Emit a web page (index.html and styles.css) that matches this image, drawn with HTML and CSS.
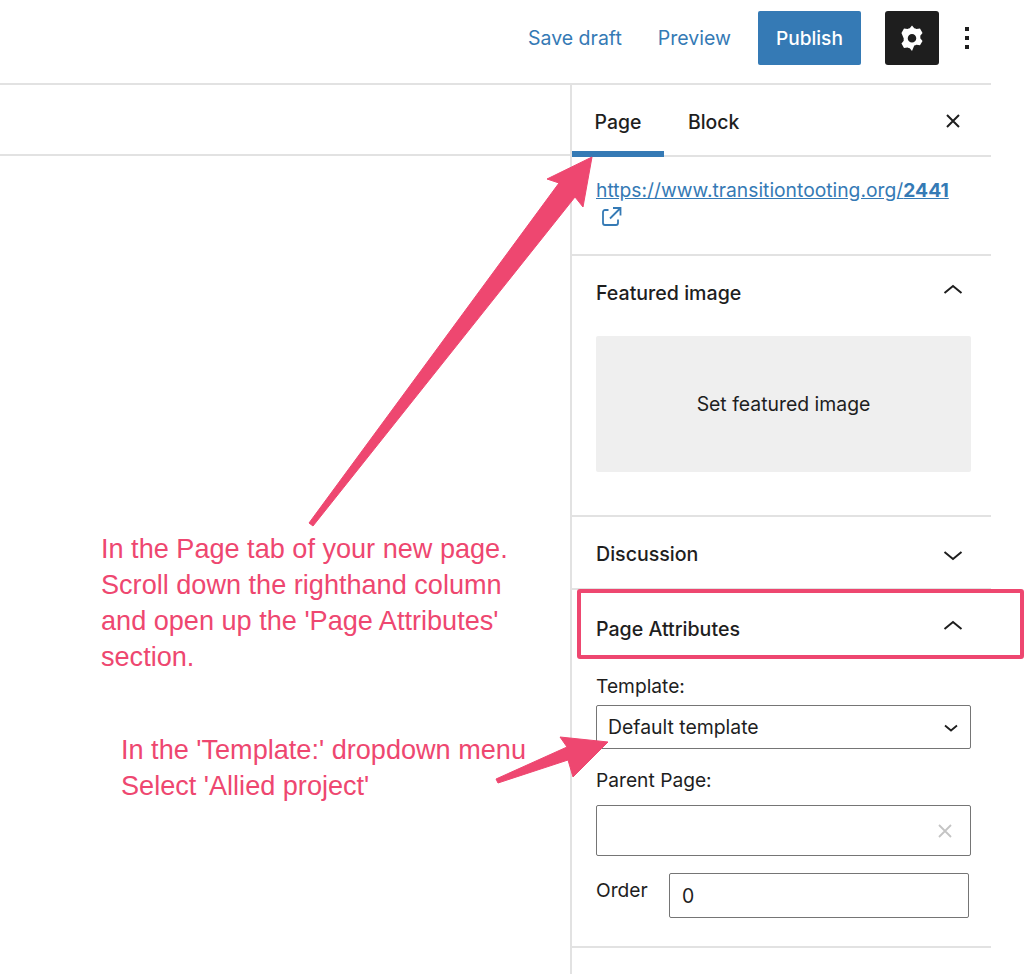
FILE: index.html
```html
<!DOCTYPE html>
<html lang="en">
<head>
<meta charset="utf-8">
<title>Page settings</title>
<link rel="stylesheet" href="styles.css">
</head>
<body>
<div class="app">
  <header class="topbar">
    <a class="top-link save">Save draft</a>
    <a class="top-link preview">Preview</a>
    <button class="publish">Publish</button>
    <button class="gear" aria-label="Settings">
      <svg width="32" height="32" viewBox="0 0 24 24"><path fill="#fff" fill-rule="evenodd" d="M12 2.600l1.700 2.100c.6.1 1.100.3 1.600.6l2.700-.4 1.900 3.300-1.700 2.100c.1.6.1 1.200 0 1.800l1.700 2.100-1.900 3.300-2.700-.4c-.5.3-1 .5-1.600.6L12 21.800l-1.700-2.100c-.6-.1-1.100-.3-1.600-.6l-2.700.4-1.900-3.300 1.700-2.100c-.1-.6-.1-1.200 0-1.800L4.100 8.200l1.900-3.300 2.700.4c.5-.3 1-.5 1.600-.6zM12 9a3.200 3.200 0 1 0 0 6.400A3.200 3.200 0 0 0 12 9z"/></svg>
    </button>
    <div class="dots"><i></i><i></i><i></i></div>
  </header>
  <div class="body">
    <main class="canvas"><div class="canvas-bar"></div></main>
    <aside class="sidebar">
      <div class="tabs">
        <span class="tab active">Page</span>
        <span class="tab">Block</span>
        <svg class="close" width="24" height="24" viewBox="0 0 24 24"><path d="M6 6l12 12M18 6L6 18" stroke="#1e1e1e" stroke-width="2" fill="none"/></svg>
      </div>
      <section class="url">
        <a class="url-link">https://www.transitiontooting.org/<b>2441</b></a>
        <svg class="ext" width="24" height="24" viewBox="0 0 24 24" fill="none" stroke="#357ab5" stroke-width="1.800"><path d="M9.500 5H6a2 2 0 0 0-2 2v11a2 2 0 0 0 2 2h11a2 2 0 0 0 2-2v-3.500"/><path d="M11 13.500L21 3.500M14 3h7.500v7.500"/></svg>
      </section>
      <section class="panel featured">
        <div class="panel-head"><h2>Featured image</h2><svg class="chev" width="24" height="24" viewBox="0 0 24 24"><path d="M3.500 15L12 8l8.500 7" fill="none" stroke="#1e1e1e" stroke-width="2"/></svg></div>
        <div class="set-image">Set featured image</div>
      </section>
      <section class="panel discussion">
        <div class="panel-head"><h2>Discussion</h2><svg class="chev" width="24" height="24" viewBox="0 0 24 24"><path d="M3.500 9l8.500 7 8.500-7" fill="none" stroke="#1e1e1e" stroke-width="2"/></svg></div>
      </section>
      <section class="panel attributes">
        <div class="panel-head"><h2>Page Attributes</h2><svg class="chev" width="24" height="24" viewBox="0 0 24 24"><path d="M3.500 15L12 8l8.500 7" fill="none" stroke="#1e1e1e" stroke-width="2"/></svg></div>
        <label class="field-label template-label">Template:</label>
        <div class="control select"><span>Default template</span><svg width="16" height="16" viewBox="0 0 16 16"><path d="M2 6.500l6 5 6-5" fill="none" stroke="#1e1e1e" stroke-width="1.800"/></svg></div>
        <label class="field-label parent-label">Parent Page:</label>
        <div class="control combo"><svg width="18" height="18" viewBox="0 0 18 18"><path d="M3 3l12 12M15 3L3 15" stroke="#c4c4c4" stroke-width="1.800" fill="none"/></svg></div>
        <div class="order-row"><label class="field-label order-label">Order</label><div class="control order">0</div></div>
      </section>
    </aside>
  </div>
</div>

<svg class="overlay" width="1024" height="974" viewBox="0 0 1024 974" aria-hidden="true">
  <path fill="#ee4770" stroke="#ee4770" stroke-width="1" stroke-linejoin="round" d="M592 157L583 207 575 197 313 526 309 523 559 183 547 179Z"/>
  <path fill="#ee4770" stroke="#ee4770" stroke-width="1" stroke-linejoin="round" d="M608 742L573 777 568 760 498 783 496 779 567 747 560 737Z"/>
  <rect x="579" y="591" width="443" height="66" fill="none" stroke="#ee4770" stroke-width="4" rx="1"/>
</svg>
<p class="note note-one">In the Page tab of your new page.<br>Scroll down the righthand column<br>and open up the 'Page Attributes'<br>section.</p>
<p class="note note-two">In the 'Template:' dropdown menu<br>Select 'Allied project'</p>
</body>
</html>
```
FILE: styles.css
```css
* { box-sizing: border-box; }
html, body { margin: 0; padding: 0; background: #fff; }
body { width: 1024px; height: 974px; overflow: hidden; position: relative; font-family: Inter, "Noto Sans", sans-serif; color: #1e1e1e; }
.app { width: 991px; height: 974px; display: flex; flex-direction: column; }

.topbar { height: 85px; flex: none; border-bottom: 2px solid #e2e2e2; display: flex; align-items: flex-start; padding: 11px 0 0 528px; font-size: 19.500px; }
.top-link { color: #357ab5; line-height: 54px; }
.save { margin-right: 36px; }
.preview { margin-right: 27px; }
.publish { width: 103px; height: 54px; border: 0; border-radius: 2px; background: #357ab5; color: #fff; font: 500 19.100px Inter, sans-serif; margin-right: 24px; padding: 0; }
.gear { width: 54px; height: 54px; border: 0; border-radius: 3px; background: #1e1e1e; display: flex; align-items: center; justify-content: center; padding: 0; }
.dots { margin: 16px 0 0 26px; width: 4px; display: flex; flex-direction: column; gap: 5px; }
.dots i { display: block; width: 4px; height: 4px; background: #1e1e1e; }

.body { flex: 1; display: flex; min-height: 0; }
.canvas { width: 570px; flex: none; }
.canvas-bar { height: 71px; border-bottom: 2px solid #e2e2e2; }
.sidebar { flex: 1; border-left: 2px solid #e2e2e2; display: flex; flex-direction: column; }

.tabs { height: 72px; flex: none; display: flex; align-items: flex-start; border-bottom: 2px solid #e2e2e2; position: relative; }
.tab { font-size: 19.400px; font-weight: 500; line-height: 74px; height: 72px; width: 92px; text-align: center; flex: none; }
.tab.active { box-shadow: inset 0 -6px 0 #357ab5; }
.tab + .tab { width: auto; margin-left: 24px; }
.close { margin: 24px 26px 0 auto; }

.url { height: 99px; flex: none; padding: 20px 24px 0; border-bottom: 2px solid #e2e2e2; }
.url-link { display: block; color: #357ab5; font-size: 19.300px; line-height: 26px; text-decoration: underline; white-space: nowrap; }
.ext { display: block; margin: 2px 0 0 3px; }

.panel { flex: none; border-bottom: 2px solid #e2e2e2; padding: 0 20px 0 24px; }
.panel-head { display: flex; justify-content: space-between; align-items: center; height: 72px; padding-top: 2px; }
.panel-head h2 { margin: 0; font-size: 19.600px; font-weight: 500; line-height: 24px; }
.chev { margin-right: 6px; margin-top: -6px; }

.featured { height: 261px; }
.set-image { width: 375px; height: 136px; margin-top: 8px; background: #efefef; border-radius: 2px; display: flex; align-items: center; justify-content: center; font-size: 19.400px; }

.discussion { height: 73px; }
.discussion .chev { margin-top: 1px; }
.attributes { height: 358px; }
.attributes .panel-head { height: 76px; }

.field-label { display: block; font-size: 19.200px; line-height: 24px; }
.template-label { margin-top: 8px; }
.control { border: 1px solid #757575; border-radius: 2px; background: #fff; display: flex; align-items: center; font-size: 19.400px; color: #1e1e1e; }
.select { width: 375px; height: 44px; margin-top: 7px; padding: 0 11px; justify-content: space-between; }
.parent-label { margin-top: 19px; }
.combo { width: 375px; height: 51px; margin-top: 13px; justify-content: flex-end; padding-right: 16px; }
.order-row { display: flex; align-items: flex-start; margin-top: 17px; }
.order-label { width: 73px; margin-top: 5px; }
.order { width: 300px; height: 45px; padding: 0 12px; }

.overlay { position: absolute; left: 0; top: 0; pointer-events: none; }
.note { position: absolute; margin: 0; font-family: "Liberation Sans", Arial, sans-serif; font-size: 27.100px; line-height: 36px; color: #ee4770; white-space: nowrap; }
.note-one { left: 101px; top: 531px; }
.note-two { left: 121px; top: 732px; }
```
